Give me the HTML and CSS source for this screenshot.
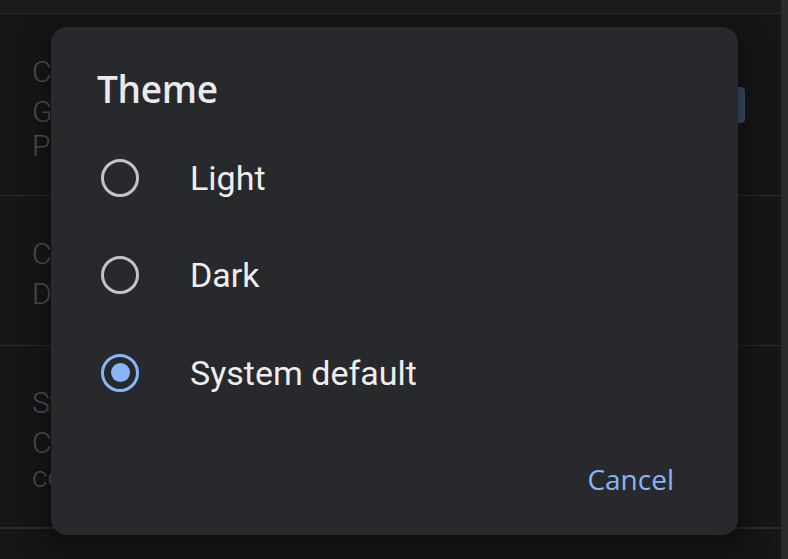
FILE: index.html
```html
<!DOCTYPE html>
<html>
<head>
<meta charset="utf-8">
<link rel="stylesheet" href="styles.css">
</head>
<body>
<div class="screen">
  <div class="topbar"></div>
  <div class="list">
    <div class="row r1">
      <div class="texts">
        <div class="t1">Choose theme</div>
        <div class="t2">Google Password</div>
        <div class="t2">Personal info</div>
      </div>
      <div class="btn"></div>
    </div>
    <div class="row r2">
      <div class="texts">
        <div class="t1">Choose theme</div>
        <div class="t2">Default</div>
      </div>
    </div>
    <div class="row r3">
      <div class="texts">
        <div class="t1">Storage</div>
        <div class="t2">Connected apps and</div>
        <div class="t2">content</div>
      </div>
    </div>
    <div class="row r4"></div>
  </div>
  <div class="scrollbar"></div>

  <div class="dialog">
    <h1 class="title">Theme</h1>
    <div class="options">
      <div class="option">
        <span class="radio"></span>
        <span class="label">Light</span>
      </div>
      <div class="option">
        <span class="radio"></span>
        <span class="label">Dark</span>
      </div>
      <div class="option">
        <span class="radio checked"></span>
        <span class="label">System default</span>
      </div>
    </div>
    <div class="actions">
      <span class="cancel">Cancel</span>
    </div>
  </div>
</div>
</body>
</html>
```

FILE: styles.css
```css
html, body {
  margin: 0;
  padding: 0;
  background: #161618;
}
.screen {
  position: relative;
  width: 788px;
  height: 559px;
  overflow: hidden;
  background: #161618;
  font-family: Roboto, "Noto Sans", sans-serif;
}
.topbar {
  height: 13px;
  background: #1b1b1c;
  border-bottom: 1px solid #2a2a2b;
}
.list {
  margin-right: 7px;
}
.row {
  position: relative;
  padding-left: 32px;
  border-bottom: 1px solid #2a2a2b;
  box-sizing: border-box;
}
.texts {
  width: 19px;
  overflow: hidden;
}
.r1 { height: 182px; padding-top: 41px; }
.r2 { height: 150px; padding-top: 41px; }
.r3 { height: 182px; padding-top: 40px; }
.t1, .t2 {
  color: #505153;
  font-size: 30px;
  font-weight: 300;
  line-height: 34px;
  white-space: nowrap;
}
.t1 { margin-bottom: 6px; }
.btn {
  position: absolute;
  right: 36px;
  top: 73px;
  width: 30px;
  height: 36px;
  background: #3a4d68;
  border-radius: 4px;
}
.scrollbar {
  position: absolute;
  top: 0;
  right: 0;
  width: 7px;
  height: 100%;
  background: #2b2b2c;
}
.dialog {
  position: absolute;
  left: 51px;
  top: 27px;
  width: 687px;
  height: 508px;
  box-sizing: border-box;
  background: #28292c;
  border-radius: 16px;
  box-shadow: 0 10px 24px 8px rgba(0,0,0,0.35);
  padding: 40px 46px 0 46px;
  display: flex;
  flex-direction: column;
}
.title {
  margin: 0;
  font-family: "Open Sans", Roboto, sans-serif;
  font-weight: 600;
  font-size: 37px;
  line-height: 44px;
  color: #e8eaed;
  letter-spacing: -0.3px;
}
.options {
  margin-top: 18px;
  display: flex;
  flex-direction: column;
}
.option {
  height: 97.5px;
  display: flex;
  align-items: center;
  margin-left: 4px;
}
.radio {
  width: 38px;
  height: 38px;
  box-sizing: border-box;
  border: 3.5px solid #c4c4c4;
  border-radius: 50%;
  flex: none;
  position: relative;
}
.radio.checked {
  border-color: #8ab4f8;
}
.radio.checked::after {
  content: "";
  position: absolute;
  left: 50%;
  top: 50%;
  width: 19px;
  height: 19px;
  margin: -9.5px 0 0 -9.5px;
  border-radius: 50%;
  background: #8ab4f8;
}
.label {
  margin-left: 51px;
  font-size: 34px;
  color: #eeeeee;
}
.actions {
  margin-top: auto;
  height: 76px;
  display: flex;
  justify-content: flex-end;
  padding-right: 18px;
}
.cancel {
  font-family: "Open Sans", Roboto, sans-serif;
  font-weight: 500;
  color: #8ab4f8;
  font-size: 28px;
  line-height: 40px;
}
```
